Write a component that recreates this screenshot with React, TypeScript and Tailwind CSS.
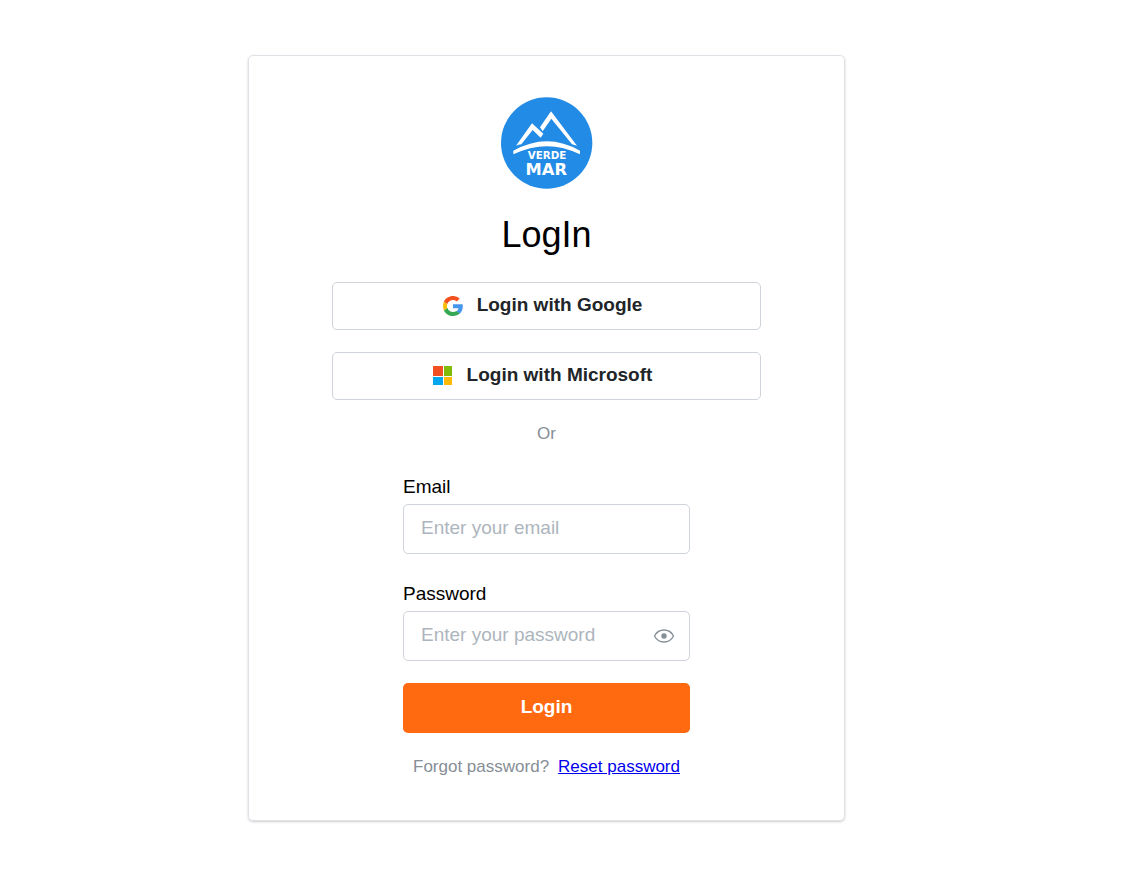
import React, { useState } from 'react';

const Logo = () => (
  <svg viewBox="0 0 276 276" className="size-[92px]" role="img" aria-label="Verde Mar">
    <circle cx="137" cy="138" r="137" fill="#228be6" />
    <g fill="#fff">
      <path d="M45 146 L93 79 L127 110 L119 122 L95 99 L61 142 L52 143 Z" />
      <path d="M117 91 L150 43 L228 146 L213 142 L151 65 L125 103 Z" />
      <path d="M37 161 Q138 104 237 161 L237 172 Q138 123 37 172 Z" />
    </g>
    <g fill="#fff" textAnchor="middle" fontFamily="DejaVu Sans, sans-serif" fontWeight="bold">
      <text x="138" y="185" fontSize="31">VERDE</text>
      <text x="136" y="234" fontSize="49">MAR</text>
    </g>
  </svg>
);

const GoogleIcon = () => (
  <svg viewBox="0 0 48 48" className="size-5" aria-hidden="true">
    <path fill="#4596ec" d="M47.5 24.6c0-1.6-.1-3.200-.4-4.600H24v9.200h13.200c-.6 3-2.300 5.500-4.900 7.200l7.900 6.100c4.600-4.300 7.300-10.500 7.300-17.900z" />
    <path fill="#34a853" d="M24 48c6.600 0 12.100-2.200 16.200-5.900l-7.900-6.100c-2.200 1.500-5 2.300-8.300 2.300-6.400 0-11.800-4.300-13.700-10.100l-8.100 6.300C6.100 42.600 14.400 48 24 48z" />
    <path fill="#fbbc05" d="M10.300 28.600C9.800 27.100 9.500 25.600 9.500 24s.3-3.100.8-4.600l-8.100-6.300C.8 16.400 0 20.100 0 24s.8 7.600 2.200 10.900z" />
    <path fill="#f4511e" d="M24 9.500c3.500 0 6.700 1.200 9.200 3.600l6.900-6.900C35.900 2.400 30.500 0 24 0 14.400 0 6.100 5.400 2.200 13.100l8.100 6.300C12.200 13.700 17.600 9.500 24 9.500z" />
  </svg>
);

const MicrosoftIcon = () => (
  <svg viewBox="0 0 20 20" className="size-5" aria-hidden="true">
    <path fill="#f25022" d="M0 0h10v10H0z" />
    <path fill="#80bb0a" d="M11 0h8v10h-8z" />
    <path fill="#05a6f0" d="M0 11h10v8H0z" />
    <path fill="#ffba08" d="M11 11h8v8h-8z" />
  </svg>
);

const EyeIcon = () => (
  <svg viewBox="0 0 22 14" className="w-[22px]" aria-hidden="true">
    <path d="M1.500 7C3.500 3 7 1 11 1s7.500 2 9.500 6c-2 4-5.500 6-9.500 6S3.500 11 1.500 7z" fill="none" stroke="#868e96" strokeWidth="1.300" />
    <circle cx="11" cy="7" r="2.700" fill="#868e96" />
  </svg>
);

const providers = [
  { name: 'Google', Icon: GoogleIcon },
  { name: 'Microsoft', Icon: MicrosoftIcon },
];

const App = () => {
  const [showPassword, setShowPassword] = useState(false);

  return (
    <main className="flex justify-center bg-white py-[55px] pr-[51px] font-['Liberation_Sans',Arial,sans-serif] text-black">
      <div className="flex w-full max-w-[597px] flex-col items-center rounded-[5px] border border-[#dee2e6] px-[83px] py-[41px] shadow-[0_1px_3px_rgba(0,0,0,0.1),0_1px_2px_rgba(0,0,0,0.1)]">
        <Logo />
        <h1 className="mt-[22px] text-4xl leading-[48px]">LogIn</h1>

        <div className="mt-[23px] flex w-full flex-col gap-[22px]">
          {providers.map(({ name, Icon }) => (
            <button
              key={name}
              type="button"
              className="flex h-12 items-center justify-center gap-3.5 rounded-[5px] border border-[#ced4da] pr-2 text-[19px] font-bold text-[#212529]"
            >
              <Icon />
              <span className="pb-0.5">Login with {name}</span>
            </button>
          ))}
        </div>

        <p className="mt-[22px] text-[17px] leading-6 text-[#868e96]">Or</p>

        <form className="mt-[27px] flex w-full max-w-[287px] flex-col" onSubmit={(e) => e.preventDefault()}>
          <label htmlFor="email" className="text-[19px] leading-7">Email</label>
          <input
            id="email"
            type="email"
            placeholder="Enter your email"
            className="mt-[3px] h-[50px] rounded-[5px] border border-[#ced4da] px-[17px] pb-0.5 text-[19px] outline-none placeholder:text-[#adb5bd]"
          />

          <label htmlFor="password" className="mt-[26px] text-[19px] leading-7">Password</label>
          <div className="mt-[3px] flex h-[50px] items-center rounded-[5px] border border-[#ced4da] pr-3.5 pl-[17px]">
            <input
              id="password"
              type={showPassword ? 'text' : 'password'}
              placeholder="Enter your password"
              className="h-full min-w-0 flex-1 pb-0.5 text-[19px] outline-none placeholder:text-[#adb5bd]"
            />
            <button type="button" aria-label="Toggle password visibility" onClick={() => setShowPassword(!showPassword)}>
              <EyeIcon />
            </button>
          </div>

          <button type="submit" className="mt-[22px] h-[50px] rounded-[5px] bg-[#ff690f] pb-0.5 text-[19px] font-bold text-white">
            Login
          </button>
        </form>

        <p className="mt-[22px] flex gap-[9px] text-[17px] leading-6 text-[#868e96]">
          Forgot password?
          <a href="#reset" className="text-[#0000ee] underline">Reset password</a>
        </p>
      </div>
    </main>
  );
};

export default App;
